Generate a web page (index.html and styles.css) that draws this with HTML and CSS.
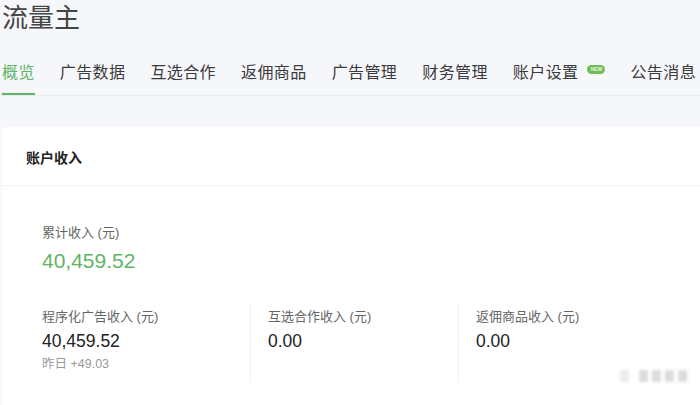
FILE: index.html
```html
<!DOCTYPE html>
<html lang="zh">
<head>
<meta charset="utf-8">
<title>流量主</title>
<link rel="stylesheet" href="styles.css">
</head>
<body>
<div class="page">
  <h1 class="title">流量主</h1>
  <nav class="tabs">
    <a class="tab active">概览</a>
    <a class="tab">广告数据</a>
    <a class="tab">互选合作</a>
    <a class="tab">返佣商品</a>
    <a class="tab">广告管理</a>
    <a class="tab">财务管理</a>
    <a class="tab">账户设置<span class="badge">NEW</span></a>
    <a class="tab">公告消息</a>
  </nav>
  <section class="card">
    <div class="card-head">账户收入</div>
    <div class="card-body">
      <div class="total">
        <div class="label">累计收入 (元)</div>
        <div class="total-value">40,459.52</div>
      </div>
      <div class="cols">
        <div class="col">
          <div class="label">程序化广告收入 (元)</div>
          <div class="value">40,459.52</div>
          <div class="sub">昨日 +49.03</div>
        </div>
        <div class="col">
          <div class="label">互选合作收入 (元)</div>
          <div class="value">0.00</div>
        </div>
        <div class="col">
          <div class="label">返佣商品收入 (元)</div>
          <div class="value">0.00</div>
        </div>
      </div>
    </div>
    <div class="mark"><i></i><i></i><i></i><i></i><i></i></div>
  </section>
</div>
</body>
</html>
```
FILE: styles.css
```css
html, body {
  margin: 0;
  padding: 0;
  background: #f6f7fa;
}
body {
  font-family: "Liberation Sans", "Noto Sans CJK SC", sans-serif;
  color: #353535;
  width: 700px;
  height: 405px;
  overflow: hidden;
}
.page {
  padding-left: 2px;
}
.title {
  margin: 0;
  font-size: 26px;
  font-weight: 400;
  line-height: 36px;
  color: #444;
}
.tabs {
  display: flex;
  gap: 25px;
  margin-top: 25px;
  border-bottom: 1px solid #e9eaee;
  margin-left: -2px;
  padding-left: 2px;
  white-space: nowrap;
  overflow: hidden;
}
.tab {
  display: flex;
  align-items: center;
  font-size: 16px;
  letter-spacing: 0.4px;
  line-height: 24px;
  padding-bottom: 8px;
  border-bottom: 2px solid transparent;
  color: #3a3a3a;
}
.tab.active {
  color: #5fb466;
  border-bottom-color: #5fb466;
}
.badge {
  display: inline-block;
  margin-left: 9px;
  margin-top: -8px;
  width: 18px;
  height: 9px;
  border-radius: 5px;
  background: #6cbf55;
  color: #e8f6df;
  font-size: 5px;
  letter-spacing: 0;
  line-height: 9px;
  text-align: center;
  font-weight: 700;
}
.card {
  position: relative;
  margin-top: 31px;
  background: #fff;
  border-radius: 4px 0 0 0;
  height: 278px;
  overflow: hidden;
}
.card-head {
  font-size: 14px;
  font-weight: 700;
  line-height: 20px;
  padding: 21px 24px 17px;
  border-bottom: 1px solid #f1f2f5;
  color: #222;
}
.card-body {
  padding: 37px 40px 0;
}
.label {
  font-size: 13px;
  line-height: 20px;
  color: #666;
}
.total-value {
  font-size: 21px;
  line-height: 28px;
  margin-top: 4px;
  color: #5fb466;
}
.cols {
  display: grid;
  grid-template-columns: 208px 208px 208px;
  margin-top: 28px;
}
.col {
  padding: 4px 0 6px 17px;
  border-left: 1px solid #f0f1f4;
  min-height: 62px;
}
.col:first-child {
  padding-left: 0;
  border-left: none;
}
.value {
  font-size: 17.5px;
  line-height: 24px;
  margin-top: 2px;
  color: #222;
}
.sub {
  font-size: 12.5px;
  line-height: 22px;
  margin-top: 0;
  color: #9a9a9a;
}
.mark {
  position: absolute;
  left: 618px;
  top: 243px;
  display: flex;
  gap: 4px;
  filter: blur(1.5px);
}
.mark i {
  display: block;
  width: 9px;
  height: 12px;
  background: #dcdcdc;
}
.mark i:first-child {
  background: #ececec;
  margin-right: 6px;
}
```
